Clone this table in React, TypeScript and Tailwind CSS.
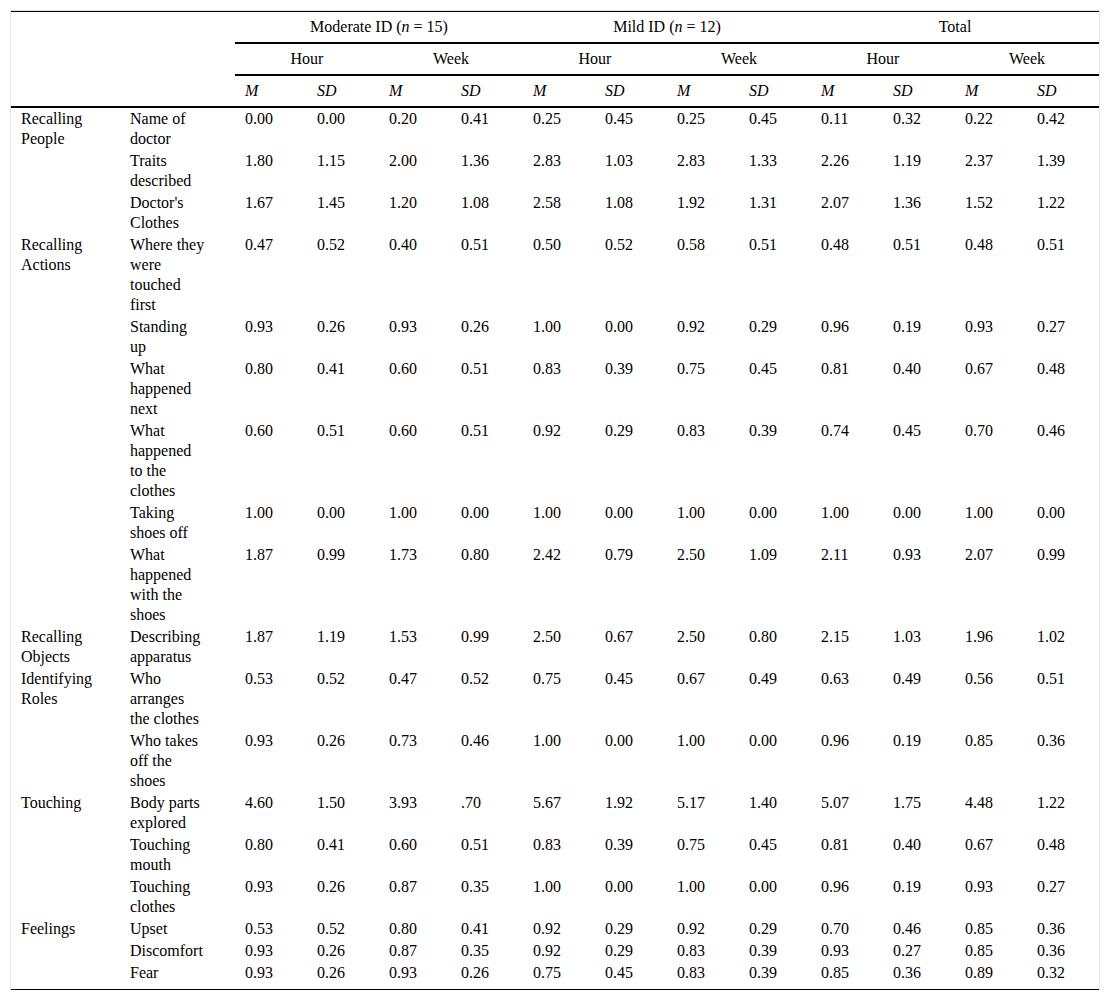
import React from "react";

type Row = { group?: string; label: string; vals: string[] };

const rows: Row[] = [
  { group: "Recalling People", label: "Name of doctor", vals: ["0.00", "0.00", "0.20", "0.41", "0.25", "0.45", "0.25", "0.45", "0.11", "0.32", "0.22", "0.42"] },
  { label: "Traits described", vals: ["1.80", "1.15", "2.00", "1.36", "2.83", "1.03", "2.83", "1.33", "2.26", "1.19", "2.37", "1.39"] },
  { label: "Doctor's Clothes", vals: ["1.67", "1.45", "1.20", "1.08", "2.58", "1.08", "1.92", "1.31", "2.07", "1.36", "1.52", "1.22"] },
  { group: "Recalling Actions", label: "Where they were touched first", vals: ["0.47", "0.52", "0.40", "0.51", "0.50", "0.52", "0.58", "0.51", "0.48", "0.51", "0.48", "0.51"] },
  { label: "Standing up", vals: ["0.93", "0.26", "0.93", "0.26", "1.00", "0.00", "0.92", "0.29", "0.96", "0.19", "0.93", "0.27"] },
  { label: "What happened next", vals: ["0.80", "0.41", "0.60", "0.51", "0.83", "0.39", "0.75", "0.45", "0.81", "0.40", "0.67", "0.48"] },
  { label: "What happened to the clothes", vals: ["0.60", "0.51", "0.60", "0.51", "0.92", "0.29", "0.83", "0.39", "0.74", "0.45", "0.70", "0.46"] },
  { label: "Taking shoes off", vals: ["1.00", "0.00", "1.00", "0.00", "1.00", "0.00", "1.00", "0.00", "1.00", "0.00", "1.00", "0.00"] },
  { label: "What happened with the shoes", vals: ["1.87", "0.99", "1.73", "0.80", "2.42", "0.79", "2.50", "1.09", "2.11", "0.93", "2.07", "0.99"] },
  { group: "Recalling Objects", label: "Describing apparatus", vals: ["1.87", "1.19", "1.53", "0.99", "2.50", "0.67", "2.50", "0.80", "2.15", "1.03", "1.96", "1.02"] },
  { group: "Identifying Roles", label: "Who arranges the clothes", vals: ["0.53", "0.52", "0.47", "0.52", "0.75", "0.45", "0.67", "0.49", "0.63", "0.49", "0.56", "0.51"] },
  { label: "Who takes off the shoes", vals: ["0.93", "0.26", "0.73", "0.46", "1.00", "0.00", "1.00", "0.00", "0.96", "0.19", "0.85", "0.36"] },
  { group: "Touching", label: "Body parts explored", vals: ["4.60", "1.50", "3.93", ".70", "5.67", "1.92", "5.17", "1.40", "5.07", "1.75", "4.48", "1.22"] },
  { label: "Touching mouth", vals: ["0.80", "0.41", "0.60", "0.51", "0.83", "0.39", "0.75", "0.45", "0.81", "0.40", "0.67", "0.48"] },
  { label: "Touching clothes", vals: ["0.93", "0.26", "0.87", "0.35", "1.00", "0.00", "1.00", "0.00", "0.96", "0.19", "0.93", "0.27"] },
  { group: "Feelings", label: "Upset", vals: ["0.53", "0.52", "0.80", "0.41", "0.92", "0.29", "0.92", "0.29", "0.70", "0.46", "0.85", "0.36"] },
  { label: "Discomfort", vals: ["0.93", "0.26", "0.87", "0.35", "0.92", "0.29", "0.83", "0.39", "0.93", "0.27", "0.85", "0.36"] },
  { label: "Fear", vals: ["0.93", "0.26", "0.93", "0.26", "0.75", "0.45", "0.83", "0.39", "0.85", "0.36", "0.89", "0.32"] },
];

const groups = [
  { name: "Moderate ID", n: "15" },
  { name: "Mild ID", n: "12" },
  { name: "Total" },
];

export default function App() {
  return (
    <div className="bg-white min-h-[1001px] pt-[10px] pl-[10px]">
      <div className="w-[1090px] border-x border-t border-[#e4e4e4]">
        <table
          className="table-fixed border-separate border-spacing-0 border-t border-b border-black w-[1088px] text-black text-[16px] leading-[20px]"
          style={{ fontFamily: '"Liberation Serif", "Times New Roman", serif' }}
        >
          <colgroup>
            <col className="w-[109px]" />
            <col className="w-[115px]" />
            {Array.from({ length: 12 }).map((_, i) => (
              <col key={i} className="w-[72px]" />
            ))}
          </colgroup>
          <thead>
            <tr>
              <th colSpan={2} rowSpan={3} className="border-b-2 border-black p-0 font-normal" />
              {groups.map((g) => (
                <th key={g.name} colSpan={4} className="border-b-2 border-black py-[5px] px-0 text-center font-normal">
                  {g.n ? (
                    <>
                      {g.name} (<i>n</i> = {g.n})
                    </>
                  ) : (
                    g.name
                  )}
                </th>
              ))}
            </tr>
            <tr>
              {Array.from({ length: 6 }).map((_, i) => (
                <th key={i} colSpan={2} className="border-b-2 border-black py-[5px] px-0 text-center font-normal">
                  {i % 2 === 0 ? "Hour" : "Week"}
                </th>
              ))}
            </tr>
            <tr>
              {Array.from({ length: 12 }).map((_, i) => (
                <th key={i} className="border-b-2 border-black py-[5px] pl-[10px] pr-0 text-left font-normal italic">
                  {i % 2 === 0 ? "M" : "SD"}
                </th>
              ))}
            </tr>
          </thead>
          <tbody>
            {rows.map((r, ri) => {
              const last = ri === rows.length - 1;
              const pad = last ? "pt-[1px] pb-[6px]" : "py-[1px]";
              return (
                <tr key={ri}>
                  <td className={`align-top pl-[10px] pr-[10px] ${pad}`}>{r.group ?? ""}</td>
                  <td className={`align-top pl-[10px] pr-[29px] ${pad}`}>{r.label}</td>
                  {r.vals.map((v, vi) => (
                    <td key={vi} className={`align-top pl-[10px] pr-0 ${pad}`}>
                      {v}
                    </td>
                  ))}
                </tr>
              );
            })}
          </tbody>
        </table>
      </div>
    </div>
  );
}
